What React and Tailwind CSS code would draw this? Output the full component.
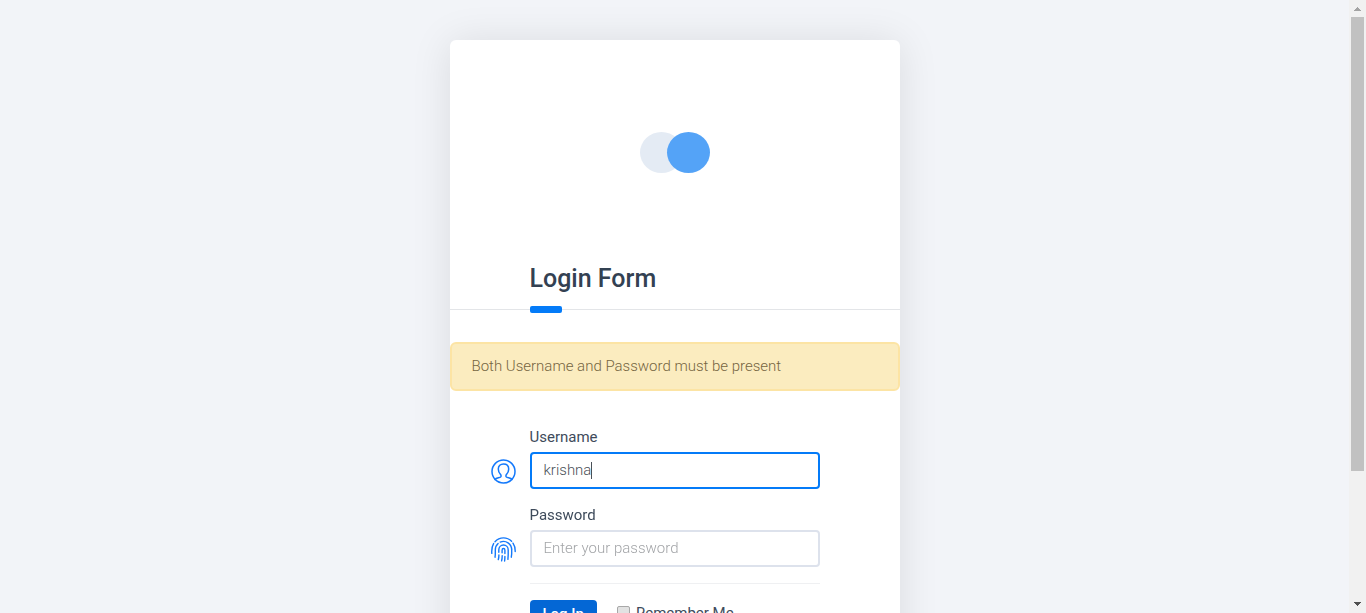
import React, { useState } from "react";

function Logo() {
  return (
    <svg width="70" height="41" viewBox="0 0 70 41" role="img" aria-label="Logo">
      <ellipse cx="21.5" cy="20.5" rx="21.5" ry="20.5" fill="#e4ebf4" />
      <ellipse cx="48.5" cy="20.5" rx="21.5" ry="20.5" fill="#54a3f7" />
    </svg>
  );
}

function UserIcon() {
  return (
    <svg width="25" height="25" viewBox="0 0 25 25" fill="none" stroke="#1479fb" strokeWidth="1.5" strokeLinecap="round" strokeLinejoin="round" aria-hidden="true">
      <circle cx="12.5" cy="12.5" r="11.5" />
      <path d="M4 20.4C5.2 18.9 8.6 18.9 9.6 18C10.2 17.4 10 16.1 9.4 15.3C8 13.7 7.3 11.9 7.3 10C7.3 6.9 9.4 4.9 12.5 4.9C15.6 4.9 17.7 6.9 17.7 10C17.7 11.9 17 13.7 15.6 15.3C15 16.1 14.8 17.4 15.4 18C16.4 18.9 19.8 18.9 21 20.4" />
    </svg>
  );
}

function FingerprintIcon() {
  return (
    <svg width="25" height="25" viewBox="0 0 25 25" fill="none" stroke="#1479fb" strokeWidth="1.4" strokeLinecap="round" aria-hidden="true">
      <path d="M.8 16.4C.5 12.6 .8 9.6 2.6 6.6" />
      <path d="M4 4.7C6.2 2.2 9.2 .9 12.5 .9C15.6 .9 18.4 2.1 20.6 4.3" />
      <path d="M22 6.2C23.6 8.6 24.3 11.4 24.2 14.6" />
      <path d="M4 20.2C4.5 18.4 4.3 15.8 4.3 12.9C4.3 10.2 5.4 7.9 7.1 6.4" />
      <path d="M9.2 5.1C14.8 2.8 20.7 6.7 20.7 12.9C20.8 15.6 20.7 18 20.3 20.2" />
      <path d="M7.3 22.6C7.8 21 7.9 19.6 7.9 18M7.8 15.2V12.9C7.8 10.2 9.8 8 12.5 8C15.2 8 17.2 10.2 17.2 12.9C17.3 16.6 17.2 19.6 16.9 22.4" />
      <path d="M10.6 23.9C11.2 22 11.2 20.6 11.2 18.6M11.1 15.8V13.2C11.1 11 13.9 11 13.9 13.2V16.6M13.9 19.4C13.9 21.2 13.8 22.4 13.6 24" />
    </svg>
  );
}

function Field({ id, label, icon, caret, ...inputProps }) {
  return (
    <div className="relative mb-4">
      <label htmlFor={id} className="block pb-[5px] text-[15px] leading-5 text-[#3e4b5b]">
        {label}
      </label>
      <span className="absolute bottom-[5px] -left-[39px] block">{icon}</span>
      <input
        id={id}
        className="block h-[37px] w-full rounded border-2 border-[#dde2ec] bg-white px-3 pb-0.5 text-[15px] font-light text-[#495057] outline-none placeholder:text-[#a3a5a8] focus:border-[#047bf8]"
        {...inputProps}
      />
      {caret && <span className="absolute bottom-[10px] left-[61px] h-[17px] w-px bg-[#495057]" />}
    </div>
  );
}

function ScrollBar() {
  return (
    <div className="flex w-[17px] shrink-0 flex-col items-center bg-[#f1f1f1]" aria-hidden="true">
      <svg className="block shrink-0" width="17" height="17" viewBox="0 0 17 17" shapeRendering="crispEdges">
        <path d="M8 7h1v1h1v1h1v1h1v1H5v-1h1V9h1V8h1z" fill="#a3a3a3" />
      </svg>
      <div className="min-h-0 w-full flex-1 px-[2px]">
        <div className="h-[78.4%] bg-[#c1c1c1]" />
      </div>
      <svg className="block shrink-0" width="17" height="17" viewBox="0 0 17 17" shapeRendering="crispEdges">
        <path d="M5 6h7v1h-1v1h-1v1H9v1H8V9H7V8H6V7H5z" fill="#505050" />
      </svg>
    </div>
  );
}

export default function App() {
  const [username, setUsername] = useState("krishna");
  const [touched, setTouched] = useState(false);

  return (
    <div className="flex h-screen overflow-hidden bg-[#f2f4f8] font-[Roboto,sans-serif] text-[#3e4b5b]">
      <main className="min-w-0 flex-1 overflow-hidden px-4 pt-10">
        <div className="mx-auto max-w-[450px] rounded-md bg-white pb-16 shadow-[0_2px_40px_rgba(4,9,20,0.1)]">
          <div className="flex justify-center py-[92px]">
            <Logo />
          </div>
          <h1 className="relative border-b border-[#e3e5e8] px-20 pb-4 text-[25px] leading-7 font-medium text-[#334152]">
            Login Form
            <span className="absolute -bottom-1 left-20 h-[7px] w-8 rounded-[2px] bg-[#047bf8]" />
          </h1>
          <div role="alert" className="mt-8 rounded-md border-2 border-[#fce4a4] bg-[#fbecbf] px-5 py-3 text-[15px] leading-[21px] font-light text-[#75653f]">
            Both Username and Password must be present
          </div>
          <form className="px-20 pt-9" onSubmit={(e) => e.preventDefault()}>
            <Field
              id="username"
              label="Username"
              icon={<UserIcon />}
              caret={!touched}
              type="text"
              value={username}
              onChange={(e) => {
                setUsername(e.target.value);
                setTouched(true);
              }}
              onBlur={() => setTouched(true)}
              autoFocus
              autoComplete="off"
            />
            <Field id="password" label="Password" icon={<FingerprintIcon />} type="password" placeholder="Enter your password" />
            <div className="flex items-center border-t border-[#eff0f2] pt-4">
              <button type="submit" className="h-[29px] rounded bg-[#0467d5] px-[13px] text-[15px] font-medium text-white">
                Log In
              </button>
              <label htmlFor="remember" className="ml-5 flex items-center gap-[6px] pb-1 text-[15px] leading-5">
                <input id="remember" type="checkbox" className="h-[13px] w-[13px] appearance-none rounded-[2px] border border-[#a8a8a8] bg-[#e2e2e2] checked:bg-[#047bf8]" />
                Remember Me
              </label>
            </div>
          </form>
        </div>
      </main>
      <ScrollBar />
    </div>
  );
}
